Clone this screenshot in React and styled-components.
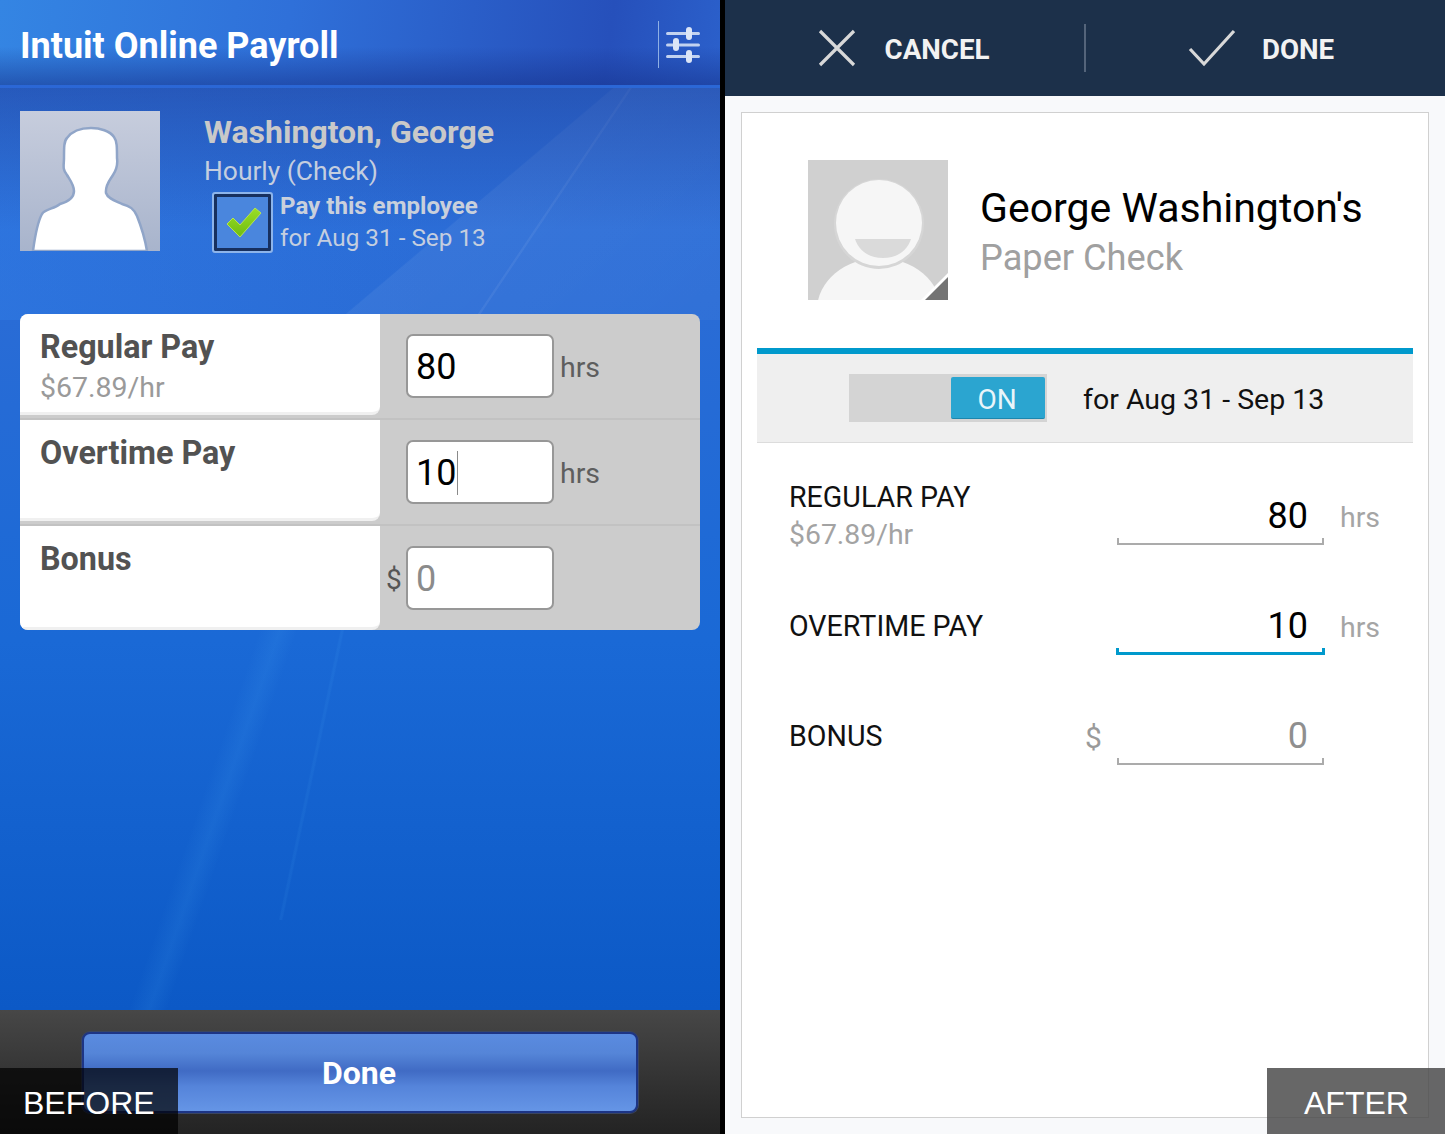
import React from 'react'
import styled, { createGlobalStyle } from 'styled-components'

const GlobalStyle = createGlobalStyle`
  html, body {
    margin: 0;
    padding: 0;
    background: #000;
  }
  body {
    font-family: Roboto, "Liberation Sans", sans-serif;
  }
`

const Page = styled.div`
  position: relative;
  display: flex;
  width: 1445px;
  height: 1134px;
  overflow: hidden;
  background: #000;
`

/* ---- before ---- */

const OldScreen = styled.section`
  width: 720px;
  height: 1134px;
  display: flex;
  flex-direction: column;
  flex-shrink: 0;
  background:
    linear-gradient(180deg, rgba(28, 52, 140, 0.42) 88px, transparent 230px) 0 0 / 100% 320px no-repeat,
    linear-gradient(123.8deg, transparent 73.6%, rgba(255, 255, 255, 0.06) 73.7%, rgba(255, 255, 255, 0.06) 73.9%, transparent 74%) 0 0 / 720px 320px no-repeat,
    linear-gradient(139.8deg, transparent 65.2%, rgba(255, 255, 255, 0.06) 65.4%, rgba(255, 255, 255, 0.03) 100%) 0 0 / 720px 320px no-repeat,
    linear-gradient(90deg, rgba(50, 130, 235, 0.35), transparent 60%) 0 0 / 100% 320px no-repeat,
    linear-gradient(102deg, transparent 43.5%, rgba(90, 190, 255, 0.07) 43.7%, rgba(90, 190, 255, 0.07) 43.9%, transparent 44.1%) 0 630px / 720px 290px no-repeat,
    linear-gradient(109deg, transparent 30.5%, rgba(90, 190, 255, 0.09) 32.9%, transparent 35%) 0 630px / 720px 380px no-repeat,
    linear-gradient(180deg, #2f70da 0, #2a6cd6 300px, #1a69d6 640px, #0c59c6 1010px);
`

const OldHeader = styled.header`
  height: 85px;
  padding: 0 20px;
  display: flex;
  align-items: center;
  justify-content: space-between;
  box-sizing: content-box;
  border-bottom: 3px solid #2b67d6;
  background:
    linear-gradient(180deg, transparent 55%, rgba(22, 50, 140, 0.55) 100%),
    linear-gradient(98deg, #3485e3 0, #2f70d9 40%, #2650bb 84%, #2b60cb 100%);
`

const OldTitle = styled.h1`
  margin: 6px 0 0;
  font-size: 36px;
  line-height: 44px;
  font-weight: 700;
  color: #fff;
`

const HeaderTools = styled.div`
  display: flex;
  align-items: center;
  gap: 7px;
  margin-top: 4px;
`

const ToolDivider = styled.span`
  width: 1px;
  height: 47px;
  background: #8fb0e4;
`

const Profile = styled.div`
  display: flex;
  padding: 23px 20px 0;
  height: 226px;
  box-sizing: border-box;
`

const OldAvatar = styled.div`
  width: 140px;
  height: 140px;
  flex-shrink: 0;
  background: linear-gradient(180deg, #c7cddd, #a8b4cc);
`

const ProfileText = styled.div`
  margin-left: 44px;
`

const OldName = styled.div`
  font-size: 32px;
  line-height: 42px;
  font-weight: 700;
  color: #c9c9c9;
`

const OldKind = styled.div`
  font-size: 26.4px;
  line-height: 37px;
  color: #c4cedf;
`

const PayRow = styled.div`
  display: flex;
  align-items: center;
  margin: 0 0 0 8px;
  gap: 7px;
`

const CheckFrame = styled.div`
  width: 61px;
  height: 61px;
  box-sizing: border-box;
  display: flex;
  align-items: center;
  justify-content: center;
  border: 2px solid #8db4ea;
  border-radius: 3px;
  background: #4a86dd;
  box-shadow: inset 0 0 0 3px #17305f;
`

const PayText = styled.div`
  display: flex;
  flex-direction: column;
`

const PayStrong = styled.span`
  font-size: 24.1px;
  line-height: 32px;
  font-weight: 700;
  color: #c9d0dc;
`

const PayDates = styled.span`
  font-size: 24.3px;
  line-height: 32px;
  color: #c4cedf;
`

const PayCard = styled.div`
  width: 680px;
  margin: 0 20px;
  border-radius: 8px;
  overflow: hidden;
  background: #ccc;
`

const PayLine = styled.div`
  display: flex;
  height: ${(p) => (p.$last ? 104 : 106)}px;
  box-sizing: border-box;
  border-bottom: ${(p) => (p.$last ? 'none' : '2px solid #c2c2c2')};
`

const PayLabelCell = styled.div`
  width: 360px;
  height: ${(p) => (p.$last ? 104 : 101)}px;
  box-sizing: border-box;
  padding: 11px 20px 0;
  background: #fff;
  border-bottom: 3px solid #f0f0f0;
  border-bottom-right-radius: 8px;
`

const PayLabel = styled.div`
  font-size: 32.3px;
  line-height: 44px;
  font-weight: 700;
  color: #525252;
`

const PayRate = styled.div`
  font-size: 28.5px;
  line-height: 38px;
  color: #9a9a9a;
`

const PayInputCell = styled.div`
  flex: 1;
  display: flex;
  align-items: flex-start;
  padding: 20px 0 0 6px;
`

const PayPrefix = styled.span`
  width: 20px;
  font-size: 28px;
  line-height: 68px;
  color: #555;
`

const OldInput = styled.div`
  width: 148px;
  height: 64px;
  margin-left: ${(p) => (p.$indent ? 20 : 0)}px;
  box-sizing: border-box;
  display: flex;
  align-items: center;
  padding: 2px 8px 0;
  background: #fff;
  border: 2px solid #979797;
  border-radius: 7px;
  font-size: 36px;
  color: ${(p) => (p.$muted ? '#8b8b8b' : '#000')};
`

const Caret = styled.span`
  width: 1px;
  height: 44px;
  margin-left: 1px;
  background: #8a8a8a;
`

const OldUnit = styled.span`
  margin-left: 6px;
  font-size: 28.5px;
  line-height: 68px;
  color: #5e5e5e;
`

const OldFooter = styled.footer`
  margin-top: auto;
  height: 124px;
  box-sizing: border-box;
  padding: 22px 82px 21px;
  background: linear-gradient(180deg, #474747, #232323);
`

const DoneButton = styled.button`
  display: block;
  width: 556px;
  height: 81px;
  padding: 0 2px 0 0;
  box-sizing: border-box;
  border: 2px solid #1d3585;
  border-radius: 8px;
  font-family: inherit;
  font-size: 32px;
  font-weight: 700;
  color: #fff;
  background: linear-gradient(180deg, #5a8be0 0, #5585d8 25%, #406bc4 48%, #5584da 68%, #6595e6 100%);
  box-shadow: 0 0 0 1px #3a4560;
`

/* ---- after ---- */

const Divider = styled.div`
  width: 5px;
  flex-shrink: 0;
  background: #000;
`

const NewScreen = styled.section`
  flex: 1;
  display: flex;
  flex-direction: column;
  background: #f8f9fb;
`

const ActionBar = styled.header`
  height: 96px;
  display: flex;
  align-items: center;
  flex-shrink: 0;
  background: #1c304a;
`

const ActionItem = styled.button`
  flex: ${(p) => (p.$narrow ? '0 0 359px' : '1')};
  display: flex;
  align-items: center;
  justify-content: center;
  gap: ${(p) => p.$gap}px;
  height: 48px;
  padding: 0 ${(p) => p.$nudge}px 0 0;
  border: none;
  background: none;
  font-family: inherit;
  font-size: 27.7px;
  font-weight: 700;
  color: #f2f2f2;
`

const ActionText = styled.span`
  padding-top: 2px;
`

const ActionDivider = styled.span`
  width: 2px;
  height: 48px;
  flex-shrink: 0;
  background: #54647a;
`

const Sheet = styled.div`
  flex: 1;
  margin: 16px;
  padding: 47px 15px 0;
  box-sizing: border-box;
  background: #fff;
  border: 1px solid #d0d0d0;
`

const Person = styled.div`
  display: flex;
  align-items: center;
  gap: 32px;
  margin-left: 51px;
`

const PersonPhoto = styled.div`
  width: 140px;
  height: 140px;
  flex-shrink: 0;
  background: #d0d0d0;
`

const PersonText = styled.div`
  margin-top: 6px;
`

const PersonName = styled.div`
  font-size: 41px;
  line-height: 50px;
  color: #000;
`

const PersonSub = styled.div`
  font-size: 36.2px;
  line-height: 50px;
  color: #a0a0a0;
`

const PayToggleBand = styled.div`
  margin-top: 48px;
  height: 95px;
  box-sizing: border-box;
  display: flex;
  align-items: center;
  padding-left: 92px;
  gap: 36px;
  background: #efefef;
  border-top: 6px solid #0099cc;
  border-bottom: 1px solid #dcdcdc;
`

const Toggle = styled.div`
  width: 198px;
  height: 48px;
  box-sizing: border-box;
  display: flex;
  justify-content: flex-end;
  align-items: center;
  padding-right: 2px;
  background: #d4d4d4;
`

const ToggleKnob = styled.span`
  width: 94px;
  height: 42px;
  display: flex;
  align-items: center;
  justify-content: center;
  padding: 3px 2px 0 0;
  border-radius: 2px;
  border-bottom: 1px solid #1c86ad;
  box-sizing: border-box;
  background: #2ba5d0;
  font-size: 28px;
  color: #e9f5fa;
`

const BandDates = styled.span`
  padding-top: 3px;
  font-size: 28.5px;
  color: #111;
`

const PayFields = styled.div`
  padding-top: 17px;
`

const FieldRow = styled.div`
  height: 110px;
  display: flex;
  align-items: center;
  padding-left: 32px;
`

const FieldLabels = styled.div`
  flex: 1;
  padding-top: 2px;
`

const FieldLabel = styled.div`
  font-size: 28.6px;
  line-height: 38px;
  color: #111;
`

const FieldRate = styled.div`
  font-size: 28.4px;
  line-height: 38px;
  color: #a3a3a3;
`

const FieldPrefix = styled.span`
  width: 32px;
  font-size: 30px;
  padding-top: 4px;
  color: #9a9a9a;
`

const Field = styled.div`
  width: 207px;
  height: 60px;
  display: flex;
  flex-direction: column;
  justify-content: flex-end;
`

const FieldValue = styled.div`
  flex: 1;
  padding: 9px 16px 0 0;
  text-align: right;
  font-size: 36px;
  line-height: 44px;
  color: ${(p) => (p.$muted ? '#8f8f8f' : '#000')};
`

const FieldLine = styled.div`
  height: ${(p) => (p.$active ? 8 : 7)}px;
  box-sizing: border-box;
  margin: 0 ${(p) => (p.$active ? -1 : 0)}px;
  border: ${(p) => (p.$active ? '3px solid #0099cc' : '2px solid #ababab')};
  border-top: none;
`

const FieldUnit = styled.span`
  width: 89px;
  padding: 4px 0 0 16px;
  box-sizing: border-box;
  font-size: 28.5px;
  color: #a5a5a5;
`

const Stamp = styled.div`
  position: absolute;
  bottom: 0;
  width: 178px;
  height: 66px;
  box-sizing: border-box;
  font-family: "Liberation Sans", Arial, sans-serif;
  font-size: 32px;
  line-height: 70px;
  color: #fff;
  ${(p) => (p.$right
    ? 'right: 0; padding-left: 37px; background: rgba(70, 70, 70, 0.82);'
    : 'left: 0; padding-left: 23px; background: rgba(0, 0, 0, 0.7);')}
`

const SlidersIcon = () => (
  <svg width="34" height="36" viewBox="0 0 34 36" fill="none">
    <g stroke="#c2d2f0" strokeWidth="3" strokeLinecap="round">
      <path d="M1.5 6.5h31M1.5 18h31M1.5 29.5h31" />
    </g>
    <g fill="#dbe5f7">
      <rect x="20" y="0" width="6" height="13" rx="3" />
      <rect x="7" y="11" width="6" height="13" rx="3" />
      <rect x="20" y="23" width="6" height="13" rx="3" />
    </g>
  </svg>
)

const Silhouette = () => (
  <svg width="140" height="140" viewBox="0 0 140 140">
    <path
      d="M13 140C15 125 17 112 22 103C25 98 34 98 40 93C47 91 54 88 54 80C54 74 50 69 47 64C42 58 44 54 44 47C44 36 44 30 47 27C52 20 62 17 71 17C80 17 90 20 94 26C97 30 97 36 97 47C98 54 97 58 93 64C90 69 85 74 86 82C88 88 96 90 102 93C110 95 114 98 117 105C121 115 125 128 127 140Z"
      fill="#fff"
      stroke="#90a5c8"
      strokeWidth="2.5"
    />
  </svg>
)

const GreenCheck = () => (
  <svg width="38" height="34" viewBox="0 0 38 34">
    <defs>
      <linearGradient id="checkFill" x1="0" y1="0" x2="0" y2="1">
        <stop offset="0" stopColor="#9ade26" />
        <stop offset="1" stopColor="#6fbc10" />
      </linearGradient>
    </defs>
    <path d="M3 19l6-6 7 7L31 3l6 5-21 24z" fill="url(#checkFill)" stroke="#b5e255" strokeWidth="1" strokeLinejoin="round" />
  </svg>
)

const PlaceholderFace = () => (
  <svg width="140" height="140" viewBox="0 0 140 140">
    <ellipse cx="71" cy="150" rx="62" ry="52" fill="#f6f6f6" />
    <circle cx="71" cy="64" r="45" fill="#d6d6d6" />
    <circle cx="71" cy="63" r="43" fill="#f6f6f6" />
    <path d="M47 79h56c-4 12-14 19-28 19s-24-7-28-19z" fill="#dadada" />
    <path d="M140 113L113 140h5L140 118z" fill="#fff" />
    <path d="M140 117L117 140h23z" fill="#747474" />
  </svg>
)

const CrossIcon = () => (
  <svg width="38" height="38" viewBox="0 0 38 38" fill="none">
    <path d="M2 2l34 34M36 2L2 36" stroke="#d8d8d8" strokeWidth="3.2" />
  </svg>
)

const TickIcon = () => (
  <svg width="48" height="38" viewBox="0 0 48 38" fill="none">
    <path d="M2 20l14 15L46 2" stroke="#d8d8d8" strokeWidth="3.2" />
  </svg>
)

const oldRows = [
  { label: 'Regular Pay', rate: '$67.89/hr', value: '80', unit: 'hrs' },
  { label: 'Overtime Pay', value: '10', unit: 'hrs', focused: true },
  { label: 'Bonus', value: '0', prefix: '$', muted: true, last: true },
]

const newRows = [
  { label: 'REGULAR PAY', rate: '$67.89/hr', value: '80', unit: 'hrs' },
  { label: 'OVERTIME PAY', value: '10', unit: 'hrs', active: true },
  { label: 'BONUS', value: '0', prefix: '$', muted: true },
]

const App = () => (
  <Page>
    <GlobalStyle />
    <OldScreen>
      <OldHeader>
        <OldTitle>Intuit Online Payroll</OldTitle>
        <HeaderTools>
          <ToolDivider />
          <SlidersIcon />
        </HeaderTools>
      </OldHeader>
      <Profile>
        <OldAvatar>
          <Silhouette />
        </OldAvatar>
        <ProfileText>
          <OldName>Washington, George</OldName>
          <OldKind>Hourly (Check)</OldKind>
          <PayRow>
            <CheckFrame>
              <GreenCheck />
            </CheckFrame>
            <PayText>
              <PayStrong>Pay this employee</PayStrong>
              <PayDates>for Aug 31 - Sep 13</PayDates>
            </PayText>
          </PayRow>
        </ProfileText>
      </Profile>
      <PayCard>
        {oldRows.map((row) => (
          <PayLine key={row.label} $last={row.last}>
            <PayLabelCell $last={row.last}>
              <PayLabel>{row.label}</PayLabel>
              {row.rate && <PayRate>{row.rate}</PayRate>}
            </PayLabelCell>
            <PayInputCell>
              {row.prefix && <PayPrefix>{row.prefix}</PayPrefix>}
              <OldInput $indent={!row.prefix} $muted={row.muted}>
                {row.value}
                {row.focused && <Caret />}
              </OldInput>
              {row.unit && <OldUnit>{row.unit}</OldUnit>}
            </PayInputCell>
          </PayLine>
        ))}
      </PayCard>
      <OldFooter>
        <DoneButton>Done</DoneButton>
      </OldFooter>
    </OldScreen>
    <Divider />
    <NewScreen>
      <ActionBar>
        <ActionItem $narrow $gap={29} $nudge={2}>
          <CrossIcon />
          <ActionText>CANCEL</ActionText>
        </ActionItem>
        <ActionDivider />
        <ActionItem $gap={26} $nudge={9}>
          <TickIcon />
          <ActionText>DONE</ActionText>
        </ActionItem>
      </ActionBar>
      <Sheet>
        <Person>
          <PersonPhoto>
            <PlaceholderFace />
          </PersonPhoto>
          <PersonText>
            <PersonName>George Washington's</PersonName>
            <PersonSub>Paper Check</PersonSub>
          </PersonText>
        </Person>
        <PayToggleBand>
          <Toggle>
            <ToggleKnob>ON</ToggleKnob>
          </Toggle>
          <BandDates>for Aug 31 - Sep 13</BandDates>
        </PayToggleBand>
        <PayFields>
          {newRows.map((row) => (
            <FieldRow key={row.label}>
              <FieldLabels>
                <FieldLabel>{row.label}</FieldLabel>
                {row.rate && <FieldRate>{row.rate}</FieldRate>}
              </FieldLabels>
              {row.prefix && <FieldPrefix>{row.prefix}</FieldPrefix>}
              <Field>
                <FieldValue $muted={row.muted}>{row.value}</FieldValue>
                <FieldLine $active={row.active} />
              </Field>
              <FieldUnit>{row.unit}</FieldUnit>
            </FieldRow>
          ))}
        </PayFields>
      </Sheet>
    </NewScreen>
    <Stamp>BEFORE</Stamp>
    <Stamp $right>AFTER</Stamp>
  </Page>
)

export default App
